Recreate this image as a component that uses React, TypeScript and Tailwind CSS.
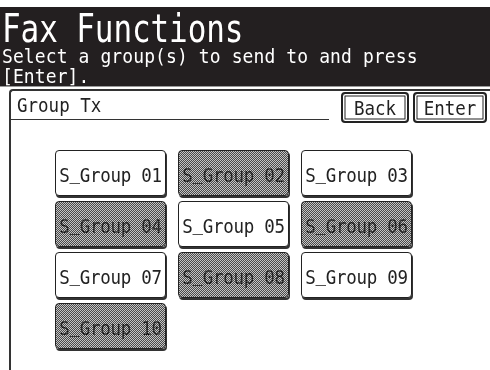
import React from "react";

const mono = { fontFamily: '"DejaVu Sans Mono", "Liberation Mono", monospace' };

const groups = [
  { n: "01", on: true },
  { n: "02", on: false },
  { n: "03", on: true },
  { n: "04", on: false },
  { n: "05", on: true },
  { n: "06", on: false },
  { n: "07", on: true },
  { n: "08", on: false },
  { n: "09", on: true },
  { n: "10", on: false },
];

function Label({ n }: { n: string }) {
  return (
    <>
      S<span className="align-[3px]">_</span>Group {n}
    </>
  );
}

function GroupButton({ n, on }: { n: string; on: boolean }) {
  if (on) {
    return (
      <div className="h-[46px] w-[111px] rounded-[4px] border-[1.5px] border-[#222] bg-white shadow-[1px_2px_0_#333] flex items-center justify-center">
        <span className="inline-block scale-y-[1.15] text-[17.5px] leading-[24px] text-[#222] tracking-[-0.3px]">
          <Label n={n} />
        </span>
      </div>
    );
  }
  return (
    <div className="h-[46px] w-[111px] rounded-[4px] border-[1.5px] border-[#222] shadow-[1px_2px_0_#333] bg-[conic-gradient(#4a4a4a_25%,#c4c4c4_0_50%,#4a4a4a_0_75%,#c4c4c4_0)] bg-[length:2px_2px] flex items-center justify-center">
      <span className="inline-block scale-y-[1.15] text-[17.5px] leading-[24px] tracking-[-0.3px] text-transparent bg-clip-text bg-[conic-gradient(#000_25%,#3a3a3a_0_50%,#000_0_75%,#3a3a3a_0)] bg-[length:2px_2px]">
        <Label n={n} />
      </span>
    </div>
  );
}

export default function App() {
  return (
    <div className="w-[490px] h-[370px] bg-white overflow-hidden pt-[7px]" style={mono}>
      <div className="h-[80px] bg-[#231f20] text-white border-b border-[#9a9a9a] pl-[2px] pt-[5px]">
        <div className="h-[26px]">
          <div className="inline-block origin-top-left scale-y-[1.27] text-[31px] leading-[26px] tracking-[-0.1px]">
            Fax Functions
          </div>
        </div>
        <div className="mt-[8px] flex flex-col gap-[3px] text-[18px] leading-[17px] tracking-[0.1px]">
          <div className="h-[17px]">
            <span className="inline-block origin-top-left scale-y-[1.12]">Select a group(s) to send to and press</span>
          </div>
          <div className="h-[17px]">
            <span className="inline-block origin-top-left scale-y-[1.12]">[Enter].</span>
          </div>
        </div>
      </div>
      <div className="mt-[2px] ml-[9px] h-[300px] border-l-2 border-t-2 border-[#333] rounded-tl-[4px]">
        <div className="flex items-start">
          <div className="w-[318px] h-[29px] border-b-[1.5px] border-[#333] pl-[6px] pt-[3px]">
            <span className="inline-block scale-y-[1.15] text-[17.5px] leading-[22px] text-[#222]">Group Tx</span>
          </div>
          <div className="ml-[12px] mt-[1px] flex gap-[4px]">
            <div className="w-[68px] h-[31px] rounded-[4px] border-2 border-[#222] shadow-[inset_0_0_0_1.5px_white,inset_0_0_0_2.5px_#222] flex items-center justify-center">
              <span className="inline-block scale-y-[1.15] text-[17.5px] leading-[22px] text-[#222]">Back</span>
            </div>
            <div className="w-[74px] h-[31px] rounded-[4px] border-2 border-[#222] shadow-[inset_0_0_0_1.5px_white,inset_0_0_0_2.5px_#222] flex items-center justify-center">
              <span className="inline-block scale-y-[1.15] text-[17.5px] leading-[22px] text-[#222]">Enter</span>
            </div>
          </div>
        </div>
        <div className="ml-[44px] mt-[27px] grid grid-cols-[111px_111px_111px] gap-x-[12px] gap-y-[5px]">
          {groups.map((g) => (
            <GroupButton key={g.n} n={g.n} on={g.on} />
          ))}
        </div>
      </div>
    </div>
  );
}
